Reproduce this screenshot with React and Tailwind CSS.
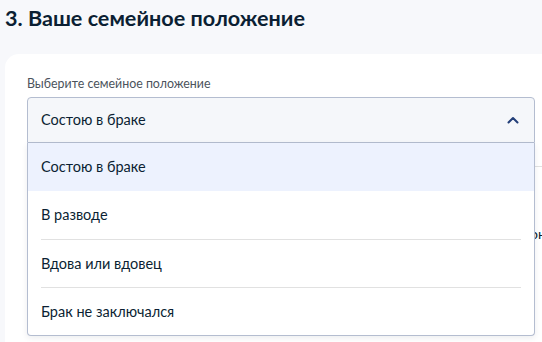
export default function App() {
    const options = ['Состою в браке', 'В разводе', 'Вдова или вдовец', 'Брак не заключался']
    const selected = 'Состою в браке'

    return (
        <div className="h-[342px] w-[542px] overflow-hidden bg-[#f7f8fb] pl-[5px] pt-[4px] font-['Lato','Noto_Sans',sans-serif] text-[#0b1f33]">
            <h2 className="text-[21.6px] leading-[28px] font-bold">3. Ваше семейное положение</h2>

            <div className="mt-[22px] w-[600px] h-[320px] rounded-tl-[14px] bg-white pl-[22px] pt-[22px]">
                <label className="block text-[12.4px] leading-[16px] text-[#4b535c]">Выберите семейное положение</label>

                <div className="relative mt-[5px] w-[508px]">
                    <button className="flex h-[46px] w-full items-center justify-between rounded-t-[4px] border border-[#b4bdd0] bg-[#f5f7fa] pl-[13px] pr-[15px] text-left text-[14.5px] text-[#0b1f33]">
                        <span>{selected}</span>
                        <svg width="12" height="8" viewBox="0 0 12 8" fill="none">
                            <path d="M1.5 6.5 6 2l4.5 4.5" stroke="#233f78" strokeWidth="2" strokeLinecap="round" strokeLinejoin="round" />
                        </svg>
                    </button>

                    <ul className="absolute left-0 right-0 top-full z-10 rounded-b-[4px] border border-t-0 border-[#b4bdd0] bg-white shadow-[0_2px_6px_rgba(11,31,51,0.08)]">
                        {options.map((opt, i) => (
                            <li key={opt} className={opt === selected ? 'bg-[#edf2fe]' : ''}>
                                <div className={`mx-[13px] flex h-[48px] items-center text-[14.5px] text-[#0b1f33] ${i > 1 ? 'border-t border-[#e1e1e1]' : ''}`}>
                                    {opt}
                                </div>
                            </li>
                        ))}
                    </ul>
                </div>

                {/* content hidden under the open list */}
                <div className="mt-[23px] border-t border-[#e1e1e1]" />
                <p className="mt-[58px] ml-[503px] text-[14px] leading-[18px] text-[#0b1f33]">онлайн</p>
            </div>
        </div>
    )
}
